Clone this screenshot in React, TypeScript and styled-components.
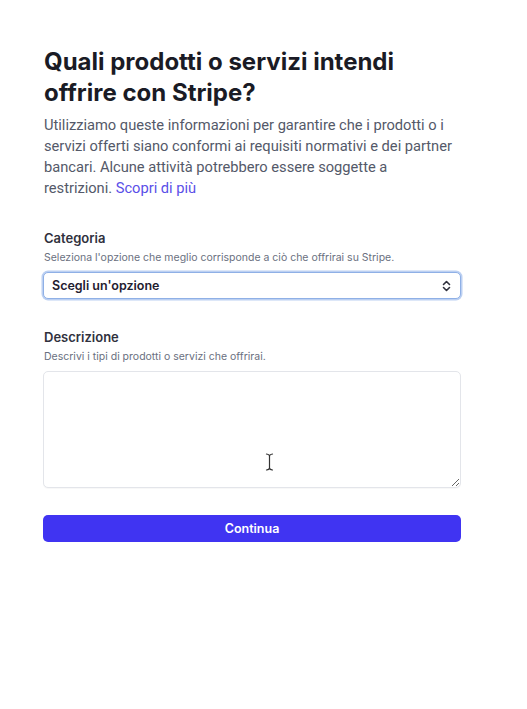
import React from "react";
import styled, { createGlobalStyle } from "styled-components";

const Global = createGlobalStyle`
  html, body { margin: 0; padding: 0; background: #ffffff; }
  body { font-family: Inter, "Noto Sans", "Liberation Sans", sans-serif; -webkit-font-smoothing: antialiased; }
  * { box-sizing: border-box; }
`;

const Page = styled.main`
  width: 527px;
  min-height: 709px;
  padding: 46px 66px 0 43px;
  display: flex;
  flex-direction: column;
`;

const Title = styled.h1`
  margin: 0;
  font-size: 24px;
  line-height: 31px;
  font-weight: 700;
  color: #1a1b25;
  letter-spacing: 0;
  padding-left: 1px;
`;

const Intro = styled.p`
  margin: 7px 0 0 1px;
  max-width: 414px;
  font-family: Roboto, Inter, "Liberation Sans", sans-serif;
  font-size: 14.7px;
  line-height: 21px;
  letter-spacing: -0.02px;
  color: #545969;
  font-weight: 400;
`;

const Link = styled.a`
  color: #5a4fe8;
  text-decoration: none;
`;

const Field = styled.section<{ $top: number }>`
  margin-top: ${(p) => p.$top}px;
  display: flex;
  flex-direction: column;
`;

const Label = styled.label`
  font-size: 13px;
  line-height: 18px;
  font-weight: 600;
  color: #30313d;
  padding-left: 1px;
`;

const Hint = styled.div<{ $gap: number }>`
  margin-top: 3px;
  margin-bottom: ${(p) => p.$gap}px;
  font-size: 10.5px;
  line-height: 16px;
  color: #6a7080;
  padding-left: 1px;
`;

const SelectBox = styled.div`
  height: 27px;
  border: 1px solid #8fb0e6;
  box-shadow: 0 0 0 1.5px #bcd0f2;
  border-radius: 5px;
  display: flex;
  align-items: center;
  justify-content: space-between;
  padding: 0 9px 0 8px;
  font-size: 12.5px;
  font-weight: 600;
  color: #1f2030;
  background: #fff;
`;

const TextAreaWrap = styled.div`
  position: relative;
  height: 117px;
`;

const TextArea = styled.textarea`
  width: 100%;
  height: 100%;
  border: 1px solid #e3e5ea;
  border-radius: 5px;
  resize: vertical;
  outline: none;
  background: #fff;
  box-shadow: 0 1px 1px rgba(0, 0, 0, 0.03);
  font-family: inherit;
  display: block;
`;

const Cursor = styled.svg`
  position: absolute;
  left: 222px;
  top: 82px;
  pointer-events: none;
`;

const Button = styled.button`
  margin-top: 27px;
  height: 27px;
  width: 100%;
  border: none;
  border-radius: 5px;
  background: #4034f2;
  color: #ffffff;
  font-family: inherit;
  font-size: 12.5px;
  font-weight: 600;
`;

export default function App() {
  return (
    <>
      <Global />
      <Page>
        <Title>Quali prodotti o servizi intendi offrire con Stripe?</Title>
        <Intro>
          Utilizziamo queste informazioni per garantire che i prodotti o i servizi offerti siano conformi ai
          requisiti normativi e dei partner bancari. Alcune attività potrebbero essere soggette a restrizioni.{" "}
          <Link href="#">Scopri di più</Link>
        </Intro>

        <Field $top={30}>
          <Label>Categoria</Label>
          <Hint $gap={6}>Seleziona l'opzione che meglio corrisponde a ciò che offrirai su Stripe.</Hint>
          <SelectBox>
            <span>Scegli un'opzione</span>
            <svg width="9" height="12" viewBox="0 0 9 12" fill="none" stroke="#30313d" strokeWidth="1.6" strokeLinecap="round" strokeLinejoin="round">
              <path d="M1.5 4.5 L4.5 1.5 L7.5 4.5" />
              <path d="M1.5 7.5 L4.5 10.5 L7.5 7.5" />
            </svg>
          </SelectBox>
        </Field>

        <Field $top={29}>
          <Label>Descrizione</Label>
          <Hint $gap={6}>Descrivi i tipi di prodotti o servizi che offrirai.</Hint>
          <TextAreaWrap>
            <TextArea aria-label="Descrizione" />
            <Cursor width="9" height="18" viewBox="0 0 9 18" fill="none" stroke="#333" strokeWidth="1.2" strokeLinecap="round">
              <path d="M1.5 1 Q4.5 1.5 4.5 3 L4.5 15 Q4.5 16.5 1.5 17" />
              <path d="M7.5 1 Q4.5 1.5 4.5 3 M4.5 15 Q4.5 16.5 7.5 17" />
            </Cursor>
          </TextAreaWrap>
        </Field>

        <Button>Continua</Button>
      </Page>
    </>
  );
}
